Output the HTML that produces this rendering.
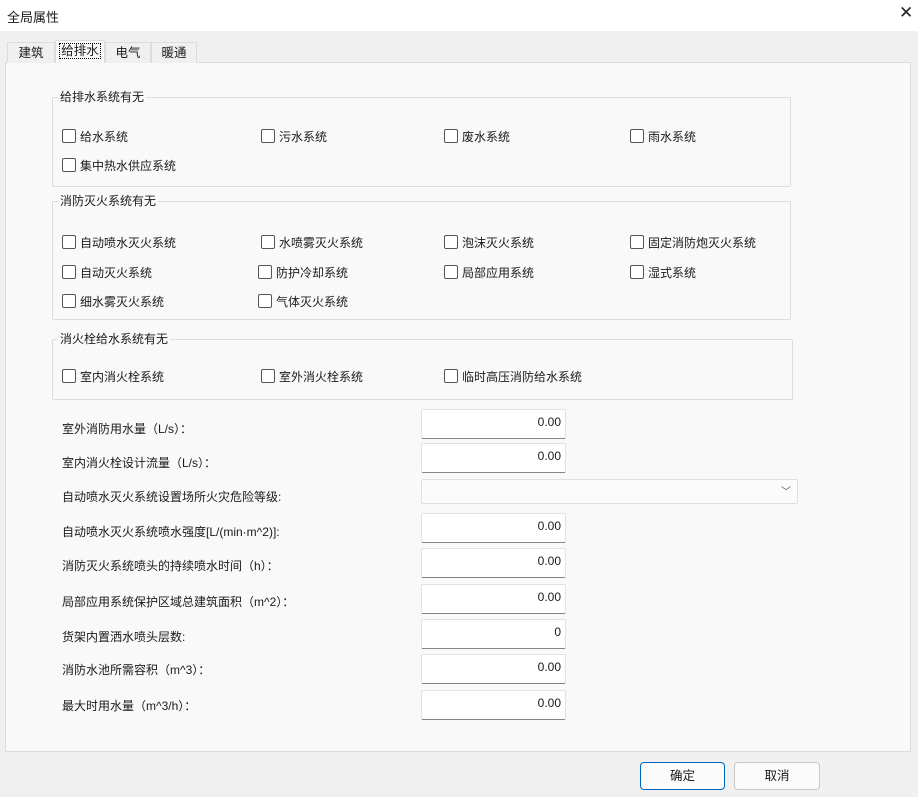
<!DOCTYPE html>
<html><head><meta charset="utf-8"><style>
*{box-sizing:border-box;margin:0;padding:0}
body{width:918px;height:797px;background:#f0f0f0;font-family:"Liberation Sans","Microsoft YaHei","Noto Sans CJK SC",sans-serif;font-size:12px;color:#1a1a1a;position:relative;overflow:hidden}
.a{position:absolute;white-space:nowrap}
.title{left:0;top:0;width:918px;height:31px;background:#fff}
.panel{left:5px;top:62px;width:906px;height:690px;background:#f9f9f9;border:1px solid #dcdcdc}
.tab{top:42px;height:21px;border:1px solid #dcdcdc;border-bottom:none;background:#f0f0f0;text-align:center;line-height:20px;font-size:12.5px}
.grp{border:1px solid #dcdcdc;border-radius:2px}
.leg{background:#f9f9f9;padding:0 2px;font-size:12px;line-height:14px}
.cb{font-size:12px;line-height:14px}
.cb::before{content:"";display:inline-block;width:12px;height:12px;border:1px solid #555;border-radius:2px;margin-right:4px;vertical-align:-2px;background:#fff}
.in{left:421px;width:145px;height:30px;background:#fff;border:1px solid #e2e2e2;border-bottom:1px solid #868686;border-radius:2px;text-align:right;padding:5px 4px 0 0;font-size:12px}
.lbl{left:62px;font-size:12px}
.btn{top:762px;height:28px;border:1px solid #c8c8c8;border-radius:4px;background:#fbfbfb;text-align:center;line-height:26px;font-size:12.5px}
</style></head><body>
<div class="a title"></div>
<div class="a" style="left:7px;top:7px;font-size:13px">全局属性</div>
<div class="a" style="left:899px;top:3px;font-size:17px;color:#222">✕</div>
<div class="a panel"></div>
<div class="a tab" style="left:7px;width:48px">建筑</div>
<div class="a tab" style="left:55px;width:50px;top:40px;height:23px;background:#f9f9f9;line-height:20px"><span style="border:1px dotted #000;padding:0 1px">给排水</span></div>
<div class="a tab" style="left:105px;width:46px">电气</div>
<div class="a tab" style="left:151px;width:46px">暖通</div>

<div class="a grp" style="left:52px;top:97px;width:739px;height:90px"></div>
<div class="a leg" style="left:58px;top:90px">给排水系统有无</div>
<div class="a cb" style="left:62px;top:129px">给水系统</div>
<div class="a cb" style="left:261px;top:129px">污水系统</div>
<div class="a cb" style="left:444px;top:129px">废水系统</div>
<div class="a cb" style="left:630px;top:129px">雨水系统</div>
<div class="a cb" style="left:62px;top:158px">集中热水供应系统</div>

<div class="a grp" style="left:52px;top:201px;width:739px;height:119px"></div>
<div class="a leg" style="left:58px;top:194px">消防灭火系统有无</div>
<div class="a cb" style="left:62px;top:235px">自动喷水灭火系统</div>
<div class="a cb" style="left:261px;top:235px">水喷雾灭火系统</div>
<div class="a cb" style="left:444px;top:235px">泡沫灭火系统</div>
<div class="a cb" style="left:630px;top:235px">固定消防炮灭火系统</div>
<div class="a cb" style="left:62px;top:265px">自动灭火系统</div>
<div class="a cb" style="left:258px;top:265px">防护冷却系统</div>
<div class="a cb" style="left:444px;top:265px">局部应用系统</div>
<div class="a cb" style="left:630px;top:265px">湿式系统</div>
<div class="a cb" style="left:62px;top:294px">细水雾灭火系统</div>
<div class="a cb" style="left:258px;top:294px">气体灭火系统</div>

<div class="a grp" style="left:52px;top:339px;width:741px;height:61px"></div>
<div class="a leg" style="left:58px;top:332px">消火栓给水系统有无</div>
<div class="a cb" style="left:62px;top:369px">室内消火栓系统</div>
<div class="a cb" style="left:261px;top:369px">室外消火栓系统</div>
<div class="a cb" style="left:444px;top:369px">临时高压消防给水系统</div>

<div class="a lbl" style="top:420px">室外消防用水量（L/s）：</div>
<div class="a in" style="top:409px">0.00</div>
<div class="a lbl" style="top:454px">室内消火栓设计流量（L/s）：</div>
<div class="a in" style="top:443px">0.00</div>
<div class="a lbl" style="top:488px">自动喷水灭火系统设置场所火灾危险等级:</div>
<div class="a" style="left:421px;top:479px;width:377px;height:25px;background:#fbfbfb;border:1px solid #e0e0e0;border-radius:2px"><span style="position:absolute;right:6px;top:3px;font-size:10px;color:#555">﹀</span></div>
<div class="a lbl" style="top:523px">自动喷水灭火系统喷水强度[L/(min·m^2)]:</div>
<div class="a in" style="top:513px">0.00</div>
<div class="a lbl" style="top:557px">消防灭火系统喷头的持续喷水时间（h）：</div>
<div class="a in" style="top:548px">0.00</div>
<div class="a lbl" style="top:593px">局部应用系统保护区域总建筑面积（m^2）：</div>
<div class="a in" style="top:584px">0.00</div>
<div class="a lbl" style="top:628px">货架内置洒水喷头层数:</div>
<div class="a in" style="top:619px">0</div>
<div class="a lbl" style="top:661px">消防水池所需容积（m^3）：</div>
<div class="a in" style="top:654px">0.00</div>
<div class="a lbl" style="top:697px">最大时用水量（m^3/h）：</div>
<div class="a in" style="top:690px">0.00</div>

<div class="a btn" style="left:640px;width:85px;border:1px solid #0067c0">确定</div>
<div class="a btn" style="left:734px;width:86px">取消</div>
</body></html>
